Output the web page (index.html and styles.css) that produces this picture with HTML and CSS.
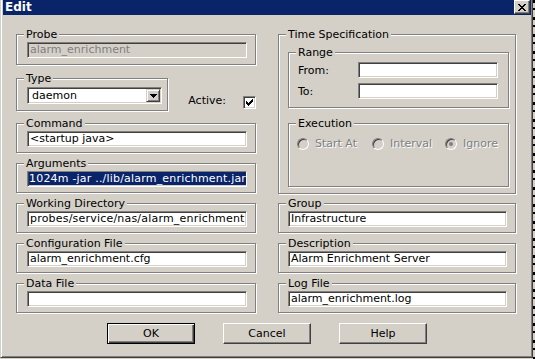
FILE: index.html
```html
<!DOCTYPE html>
<html>
<head>
<meta charset="utf-8">
<title>Edit</title>
<link rel="stylesheet" href="styles.css">
</head>
<body>
<div class="screen">
  <div class="window">
    <div class="titlebar">
      <span class="title">Edit</span>
      <span class="close"><svg width="8" height="7" viewBox="0 0 8 7" shape-rendering="crispEdges"><path d="M0 0h2v1h-2z M6 0h2v1h-2z M1 1h2v1h-2z M5 1h2v1h-2z M2 2h4v1h-4z M3 3h2v1h-2z M2 4h4v1h-4z M1 5h2v1h-2z M5 5h2v1h-2z M0 6h2v1h-2z M6 6h2v1h-2z" fill="#000"/></svg></span>
    </div>
    <div class="client">
      <div class="columns">
        <div class="col col-left">
          <fieldset class="group probe">
            <legend>Probe</legend>
            <div class="field disabled">alarm_enrichment</div>
          </fieldset>
          <div class="type-row">
            <fieldset class="group type">
              <legend>Type</legend>
              <div class="select">
                <span class="select-text">daemon</span>
                <span class="drop"><svg width="7" height="4" viewBox="0 0 7 4" shape-rendering="crispEdges"><path d="M0 0h7v1h-7z M1 1h5v1h-5z M2 2h3v1h-3z M3 3h1v1h-1z" fill="#000"/></svg></span>
              </div>
            </fieldset>
            <div class="active">
              <span class="active-label">Active:</span>
              <span class="check"><svg width="9" height="9" viewBox="0 0 9 9" shape-rendering="crispEdges"><path d="M1 3h1v3h-1z M2 4h1v3h-1z M3 5h1v3h-1z M4 4h1v3h-1z M5 3h1v3h-1z M6 2h1v3h-1z M7 1h1v3h-1z" fill="#000"/></svg></span>
            </div>
          </div>
          <fieldset class="group spaced-6">
            <legend>Command</legend>
            <div class="field">&lt;startup java&gt;</div>
          </fieldset>
          <fieldset class="group spaced">
            <legend>Arguments</legend>
            <div class="field long"><span class="selected">1024m -jar ../lib/alarm_enrichment.jar</span></div>
          </fieldset>
          <fieldset class="group spaced">
            <legend>Working Directory</legend>
            <div class="field long">probes/service/nas/alarm_enrichment</div>
          </fieldset>
          <fieldset class="group spaced">
            <legend>Configuration File</legend>
            <div class="field">alarm_enrichment.cfg</div>
          </fieldset>
          <fieldset class="group spaced">
            <legend>Data File</legend>
            <div class="field"></div>
          </fieldset>
        </div>
        <div class="col col-right">
          <fieldset class="group timespec">
            <legend>Time Specification</legend>
            <fieldset class="group range">
              <legend>Range</legend>
              <div class="range-row">
                <span class="range-label">From:</span>
                <div class="field range-field"></div>
              </div>
              <div class="range-row second">
                <span class="range-label">To:</span>
                <div class="field range-field"></div>
              </div>
            </fieldset>
            <fieldset class="group execution">
              <legend>Execution</legend>
              <div class="radios">
                <span class="radio-item w1"><span class="radio"></span><span class="radio-label">Start At</span></span>
                <span class="radio-item w2"><span class="radio"></span><span class="radio-label">Interval</span></span>
                <span class="radio-item"><span class="radio checked"></span><span class="radio-label">Ignore</span></span>
              </div>
            </fieldset>
          </fieldset>
          <fieldset class="group rgroup spaced-3">
            <legend>Group</legend>
            <div class="field">Infrastructure</div>
          </fieldset>
          <fieldset class="group rgroup spaced">
            <legend>Description</legend>
            <div class="field">Alarm Enrichment Server</div>
          </fieldset>
          <fieldset class="group rgroup spaced">
            <legend>Log File</legend>
            <div class="field">alarm_enrichment.log</div>
          </fieldset>
        </div>
      </div>
      <div class="buttons">
        <button class="btn default">OK</button>
        <button class="btn">Cancel</button>
        <button class="btn">Help</button>
      </div>
    </div>
  </div>
  <div class="backdrop-edge"></div>
</div>
</body>
</html>
```

FILE: styles.css
```css
* { box-sizing: border-box; }
html, body { margin: 0; padding: 0; }
body {
  width: 535px;
  height: 359px;
  overflow: hidden;
  background: #d4d0c8;
  font-family: "DejaVu Sans", "Noto Sans CJK KR", sans-serif;
  font-size: 11px;
  color: #000;
}
.screen { display: flex; width: 535px; height: 359px; }
.window {
  width: 533px;
  height: 358px;
  flex: none;
  background: #d4d0c8;
  border-left: 1px solid #d4d0c8;
  border-right: 1px solid #404040;
  border-bottom: 1px solid #404040;
  box-shadow: inset 1px 0 #fff, inset -1px -1px #808080;
  padding: 0 1px 2px 2px;
  display: flex;
  flex-direction: column;
}
.backdrop-edge {
  width: 2px;
  height: 359px;
  background: repeating-linear-gradient(180deg, #000 0 3px, #d4d0c8 3px 8px, #000 8px 10px, #d4d0c8 10px 17px);
}
.titlebar {
  height: 15px;
  background: #0a246a;
  display: flex;
  justify-content: space-between;
  align-items: flex-start;
  padding-left: 2px;
  flex: none;
}
.title {
  color: #fff;
  font-weight: bold;
  font-size: 12px;
  line-height: 15px;
}
.close {
  width: 16px;
  height: 14px;
  margin-right: 1px;
  background: #d4d0c8;
  border: 1px solid;
  border-color: #fff #404040 #404040 #fff;
  box-shadow: inset -1px -1px #808080;
  display: flex;
  align-items: center;
  justify-content: center;
}
.close svg { display: block; }
.client {
  flex: 1;
  padding-top: 13px;
  display: flex;
  flex-direction: column;
}
.columns {
  display: flex;
  padding-left: 13px;
  gap: 22px;
}
.col { display: flex; flex-direction: column; }
.col-left { width: 240px; }
.col-right { width: 238px; }

fieldset.group {
  margin: 0;
  min-width: 0;
  min-inline-size: 0;
  border: 1px solid #808080;
  box-shadow: inset 1px 1px #fff, 1px 1px #fff;
  padding: 1px 8px 5px 10px;
}
fieldset.group > legend {
  font-size: 11px;
  line-height: 13px;
  padding: 0 2px;
  margin-left: -3px;
  background: #d4d0c8;
}
fieldset.probe { padding-bottom: 6px; }
fieldset.spaced { margin-top: 4px; }
fieldset.spaced-6 { margin-top: 6px; }
fieldset.spaced-3 { margin-top: 3px; }

.field {
  height: 16px;
  background: #fff;
  border: 1px solid;
  border-color: #808080 #fff #fff #808080;
  box-shadow: inset 1px 1px #404040, inset -1px -1px #d4d0c8;
  padding: 0 2px;
  line-height: 14px;
  white-space: nowrap;
  overflow: hidden;
}
.field.long { letter-spacing: 0.2px; }
.field.disabled { background: #d4d0c8; color: #808080; }
.selected { background: #0a246a; color: #fff; margin-left: -1px; }

.type-row {
  display: flex;
  align-items: flex-end;
  margin-top: 7px;
}
fieldset.type {
  width: 156px;
  padding: 2px 9px 6px 10px;
}
.select {
  width: 135px;
  height: 17px;
  background: #fff;
  border: 1px solid;
  border-color: #808080 #fff #fff #808080;
  box-shadow: inset 1px 1px #404040, inset -1px -1px #d4d0c8;
  padding: 1px;
  display: flex;
}
.select-text { flex: 1; padding-left: 3px; line-height: 13px; }
.drop {
  width: 14px;
  height: 13px;
  background: #d4d0c8;
  border: 1px solid;
  border-color: #d4d0c8 #404040 #404040 #d4d0c8;
  box-shadow: inset 1px 1px #fff, inset -1px -1px #808080;
  display: flex;
  align-items: center;
  justify-content: center;
}
.drop svg { display: block; }
.active {
  display: flex;
  align-items: flex-end;
  margin-left: 20px;
  padding-bottom: 2px;
}
.active-label { line-height: 13px; margin-bottom: 2px; margin-right: 17px; }
.check {
  width: 13px;
  height: 13px;
  background: #fff;
  border: 1px solid;
  border-color: #808080 #fff #fff #808080;
  box-shadow: inset 1px 1px #404040, inset -1px -1px #d4d0c8;
  padding: 1px;
  display: flex;
}
.check svg { display: block; }

fieldset.timespec { padding: 5px 6px 6px 9px; }
fieldset.timespec > legend,
fieldset.rgroup > legend { margin-left: -2px; }
fieldset.rgroup { padding: 1px 8px 5px 9px; }
fieldset.range { padding: 3px 10px 8px 8px; }
fieldset.range > legend,
fieldset.execution > legend { margin-left: -1px; }
.range-row { display: flex; align-items: center; height: 16px; }
.range-row.second { margin-top: 5px; }
.range-label { width: 61px; padding-left: 1px; }
.range-field { flex: 1; }
fieldset.execution {
  margin-top: 9px;
  height: 70px;
  padding: 7px 0 0 8px;
}
.radios { display: flex; height: 13px; align-items: center; }
.radio-item { display: flex; align-items: center; }
.radio-item.w1 { width: 75px; }
.radio-item.w2 { width: 73px; }
.radio {
  width: 12px;
  height: 12px;
  border-radius: 50%;
  border: 1px solid;
  border-color: #808080 #fff #fff #808080;
  box-shadow: inset 1px 1px #404040, inset -1px -1px #d4d0c8;
  background: #d4d0c8;
  display: flex;
  align-items: center;
  justify-content: center;
}
.radio.checked::after {
  content: "";
  width: 4px;
  height: 4px;
  border-radius: 50%;
  background: #808080;
}
.radio-label {
  margin-left: 6px;
  color: #808080;
  text-shadow: 1px 1px #fff;
  line-height: 13px;
}

.buttons {
  display: flex;
  justify-content: center;
  gap: 28px;
  margin-top: 10px;
}
.btn {
  width: 88px;
  height: 21px;
  margin: 0;
  padding: 0;
  background: #d4d0c8;
  border: 1px solid;
  border-color: #fff #404040 #404040 #fff;
  box-shadow: inset -1px -1px #808080;
  font-family: "DejaVu Sans", sans-serif;
  font-size: 11px;
  color: #000;
  line-height: 13px;
}
.btn.default {
  border-color: #000;
  box-shadow: inset 1px 1px #fff, inset -1px -1px #404040, inset -2px -2px #808080;
}
```
